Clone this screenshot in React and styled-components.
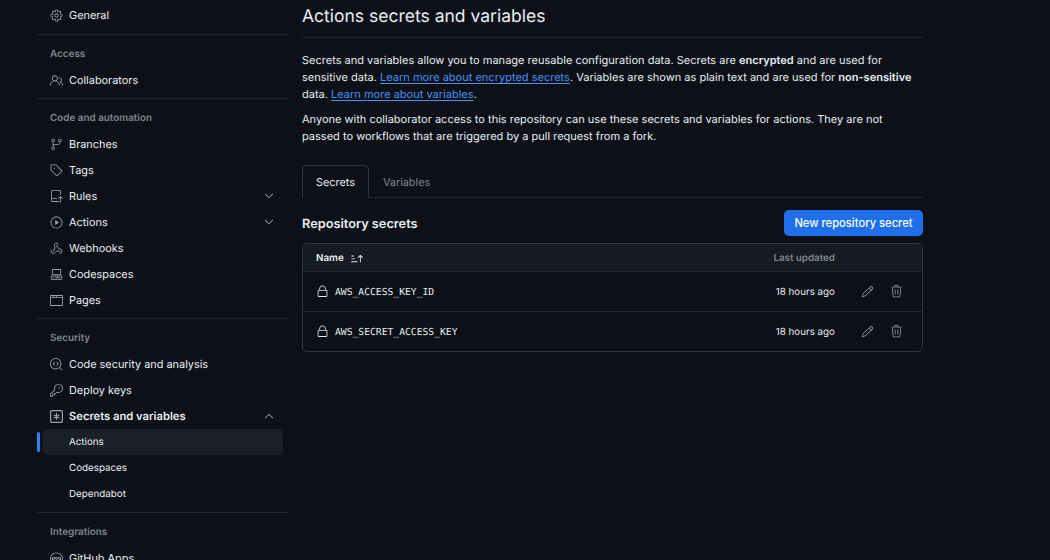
import React from "react";
import styled, { createGlobalStyle } from "styled-components";
import { Webhook } from "lucide-react";
import {
  GoGear, GoPeople, GoGitBranch, GoTag, GoRepoPush, GoPlay, GoCodespaces,
  GoBrowser, GoCodescan, GoKey, GoHubot, GoChevronDown, GoChevronUp,
  GoSortAsc, GoLock, GoPencil, GoTrash,
} from "react-icons/go";

const GlobalStyle = createGlobalStyle`
  html, body {
    margin: 0;
    background: #0d1117;
  }
  body {
    font-family: Inter, "Liberation Sans", sans-serif;
    color: #e6edf3;
    text-rendering: geometricPrecision;
  }
`;

const Page = styled.div`
  display: flex;
  gap: 13px;
  height: 560px;
  padding-left: 37px;
  overflow: hidden;
`;

const Divider = styled.div`
  height: 1px;
  margin: 5px 0 0;
  background: #21262d;
`;

const GroupTitle = styled.div`
  height: 26px;
  padding: 6px 0 0 13px;
  line-height: 26px;
  font-size: 9.9px;
  font-weight: 600;
  color: #7d8590;
`;

const Item = styled.div`
  position: relative;
  display: flex;
  align-items: center;
  gap: 6px;
  height: 26px;
  margin: 0 6px;
  padding: 0 7px 0 7px;
  border-radius: 5px;
  font-size: ${(p) => (p.$strong ? 11.2 : 10.9)}px;
  font-weight: ${(p) => (p.$strong ? 600 : 430)};
  background: ${(p) => (p.$active ? "#1b2026" : "transparent")};
  svg {
    flex: none;
    color: #9aa2ac;
  }
`;

const Sidebar = styled.nav`
  flex: none;
  width: 252px;
  padding-top: 2px;
  & > ${Item}:first-child {
    margin-bottom: 6px;
  }
`;

const SubItem = styled(Item)`
  padding-left: 26px;
  font-size: 9.8px;
`;

const ActiveBar = styled.span`
  position: absolute;
  left: -6px;
  top: 3px;
  width: 3px;
  height: 20px;
  border-radius: 2px;
  background: #2f81f7;
`;

const Chevron = styled.span`
  display: flex;
  margin-left: auto;
`;

const Main = styled.main`
  flex: none;
  width: 621px;
`;

const Title = styled.h1`
  margin: 0;
  padding: 1px 0 4px;
  border-bottom: 1px solid #21262d;
  line-height: 32px;
  font-size: 17.5px;
  font-weight: 400;
`;

const Text = styled.p`
  max-width: 615px;
  margin: ${(p) => p.$top}px 0 0;
  font-size: 11.03px;
  font-weight: 430;
  line-height: 17px;
  strong {
    font-weight: 600;
  }
  a {
    color: #4493f8;
    text-decoration: underline;
    text-underline-offset: 2px;
  }
`;

const Tabs = styled.div`
  display: flex;
  height: 32px;
  margin-top: 20px;
  border-bottom: 1px solid #21262d;
`;

const Tab = styled.div`
  display: flex;
  align-items: center;
  height: 33px;
  box-sizing: border-box;
  padding: 0 13px;
  font-size: 10.85px;
  font-weight: 430;
  border: 1px solid ${(p) => (p.$active ? "#30363d" : "transparent")};
  border-bottom-color: ${(p) => (p.$active ? "#0d1117" : "transparent")};
  border-radius: 5px 5px 0 0;
  color: ${(p) => (p.$active ? "#e6edf3" : "#7d8590")};
`;

const SectionHead = styled.div`
  display: flex;
  align-items: center;
  justify-content: space-between;
  margin-top: 12px;
`;

const SectionTitle = styled.h2`
  margin: 2px 0 0;
  font-size: 12.75px;
  font-weight: 600;
`;

const Button = styled.button`
  width: 139px;
  height: 26px;
  padding: 0;
  border: 0;
  border-radius: 5px;
  background: #1f6feb;
  color: #fff;
  font-family: inherit;
  font-size: 11.2px;
  font-weight: 500;
`;

const Table = styled.div`
  margin-top: 7px;
  border: 1px solid #30363d;
  border-radius: 5px;
  overflow: hidden;
`;

const HeadRow = styled.div`
  display: flex;
  align-items: center;
  box-sizing: border-box;
  height: 27px;
  padding: 2px 0 0 13px;
  background: #161b22;
  font-size: 9.8px;
  font-weight: 600;
  svg {
    margin-left: 6px;
    color: #e6edf3;
  }
`;

const Updated = styled.span`
  margin-left: auto;
  margin-right: 87px;
  color: #7d8590;
`;

const Row = styled.div`
  display: flex;
  align-items: center;
  height: 39px;
  padding-left: 13px;
  border-top: 1px solid #21262d;
  svg {
    flex: none;
  }
`;

const KeyName = styled.span`
  margin: 2px 0 0 6px;
  font-family: "DejaVu Sans Mono", "Liberation Mono", monospace;
  font-size: 9.7px;
`;

const When = styled.span`
  margin: 2px 0 0 auto;
  font-size: 9.8px;
  font-weight: 430;
`;

const Actions = styled.div`
  display: flex;
  gap: 16px;
  margin: 0 19px 0 26px;
  color: #9198a1;
`;

const KeyAsterisk = ({ size }) => (
  <svg width={size} height={size} viewBox="0 0 16 16" fill="none" stroke="currentColor">
    <rect x="0.75" y="0.75" width="14.5" height="14.5" rx="1.75" strokeWidth="1.5" />
    <path d="M8 4.5v7M5 6.25l6 3.5M11 6.25l-6 3.5" strokeWidth="1.5" strokeLinecap="round" />
  </svg>
);

const WebhookIcon = ({ size }) => <Webhook size={size} strokeWidth={1.7} />;

const Group = ({ title, children }) => (
  <>
    <Divider />
    <GroupTitle>{title}</GroupTitle>
    {children}
  </>
);

const Entry = ({ icon: Icon, label, chevron: Chev, strong }) => (
  <Item $strong={strong}>
    <Icon size={13} />
    {label}
    {Chev && (
      <Chevron>
        <Chev size={14} />
      </Chevron>
    )}
  </Item>
);

const secrets = ["AWS_ACCESS_KEY_ID", "AWS_SECRET_ACCESS_KEY"];

export default function App() {
  return (
    <Page>
      <GlobalStyle />
      <Sidebar>
        <Entry icon={GoGear} label="General" />
        <Group title="Access">
          <Entry icon={GoPeople} label="Collaborators" />
        </Group>
        <Group title="Code and automation">
          <Entry icon={GoGitBranch} label="Branches" />
          <Entry icon={GoTag} label="Tags" />
          <Entry icon={GoRepoPush} label="Rules" chevron={GoChevronDown} />
          <Entry icon={GoPlay} label="Actions" chevron={GoChevronDown} />
          <Entry icon={WebhookIcon} label="Webhooks" />
          <Entry icon={GoCodespaces} label="Codespaces" />
          <Entry icon={GoBrowser} label="Pages" />
        </Group>
        <Group title="Security">
          <Entry icon={GoCodescan} label="Code security and analysis" />
          <Entry icon={GoKey} label="Deploy keys" />
          <Entry icon={KeyAsterisk} label="Secrets and variables" chevron={GoChevronUp} strong />
          <SubItem $active>
            <ActiveBar />
            Actions
          </SubItem>
          <SubItem>Codespaces</SubItem>
          <SubItem>Dependabot</SubItem>
        </Group>
        <Group title="Integrations">
          <Entry icon={GoHubot} label="GitHub Apps" />
        </Group>
      </Sidebar>
      <Main>
        <Title>Actions secrets and variables</Title>
        <Text $top={14}>
          Secrets and variables allow you to manage reusable configuration data. Secrets are{" "}
          <strong>encrypted</strong> and are used for sensitive data.{" "}
          <a>Learn more about encrypted secrets</a>. Variables are shown as plain text and are used
          for <strong>non-sensitive</strong> data. <a>Learn more about variables</a>.
        </Text>
        <Text $top={8}>
          Anyone with collaborator access to this repository can use these secrets and variables for
          actions. They are not passed to workflows that are triggered by a pull request from a fork.
        </Text>
        <Tabs>
          <Tab $active>Secrets</Tab>
          <Tab>Variables</Tab>
        </Tabs>
        <SectionHead>
          <SectionTitle>Repository secrets</SectionTitle>
          <Button>New repository secret</Button>
        </SectionHead>
        <Table>
          <HeadRow>
            Name
            <GoSortAsc size={14} />
            <Updated>Last updated</Updated>
          </HeadRow>
          {secrets.map((name) => (
            <Row key={name}>
              <GoLock size={13} />
              <KeyName>{name}</KeyName>
              <When>18 hours ago</When>
              <Actions>
                <GoPencil size={13} />
                <GoTrash size={13} />
              </Actions>
            </Row>
          ))}
        </Table>
      </Main>
    </Page>
  );
}
